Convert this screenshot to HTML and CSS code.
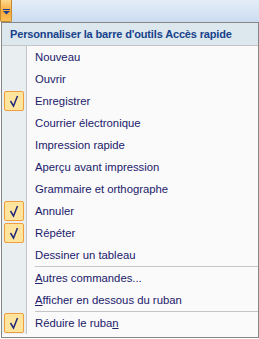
FILE: index.html
```html
<!DOCTYPE html>
<html lang="fr">
<head>
    <meta charset="UTF-8">
    <title>Barre d'outils Accès rapide</title>
    <link rel="stylesheet" href="styles.css">
</head>
<body>
    <div class="toolbar">
        <div class="qat-btn">
            <svg width="7" height="6" viewBox="0 0 7 6">
                <rect x="0" y="0" width="7" height="1" fill="#1e3f8f"/>
                <path d="M0 2 H7 L3.5 5.5 Z" fill="#1e3f8f"/>
            </svg>
        </div>
    </div>

    <div class="menu">
        <div class="menu-title">Personnaliser la barre d'outils Accès rapide</div>
        <div class="menu-body">
            <div class="item"><span class="check"></span><span class="label">Nouveau</span></div>
            <div class="item"><span class="check"></span><span class="label">Ouvrir</span></div>
            <div class="item"><span class="check on"><svg viewBox="0 0 18 18"><path d="M5.5 9 L8.5 14 L12.5 4" /></svg></span><span class="label">Enregistrer</span></div>
            <div class="item"><span class="check"></span><span class="label">Courrier électronique</span></div>
            <div class="item"><span class="check"></span><span class="label">Impression rapide</span></div>
            <div class="item"><span class="check"></span><span class="label">Aperçu avant impression</span></div>
            <div class="item"><span class="check"></span><span class="label">Grammaire et orthographe</span></div>
            <div class="item"><span class="check on"><svg viewBox="0 0 18 18"><path d="M5.5 9 L8.5 14 L12.5 4" /></svg></span><span class="label">Annuler</span></div>
            <div class="item"><span class="check on"><svg viewBox="0 0 18 18"><path d="M5.5 9 L8.5 14 L12.5 4" /></svg></span><span class="label">Répéter</span></div>
            <div class="item"><span class="check"></span><span class="label">Dessiner un tableau</span></div>
            <div class="sep"></div>
            <div class="item"><span class="check"></span><span class="label"><u>A</u>utres commandes...</span></div>
            <div class="item"><span class="check"></span><span class="label"><u>A</u>fficher en dessous du ruban</span></div>
            <div class="sep"></div>
            <div class="item"><span class="check on"><svg viewBox="0 0 18 18"><path d="M5.5 9 L8.5 14 L12.5 4" /></svg></span><span class="label">Réduire le ruba<u>n</u></span></div>
        </div>
    </div>
</body>
</html>
```

FILE: styles.css
```css
body {
    margin: 0;
    padding: 0;
    width: 259px;
    height: 339px;
    background: #ffffff;
    font-family: "Liberation Sans", Arial, sans-serif;
    font-size: 11.3px;
    overflow: hidden;
}
.toolbar {
    height: 22px;
    background: linear-gradient(#e4edf8, #cbdcf0);
}
.qat-btn {
    width: 12px;
    height: 22px;
    box-sizing: border-box;
    border: 1px solid #c58a2c;
    border-top: none;
    border-radius: 0 0 2px 2px;
    background: linear-gradient(#ffd98c, #f9a93c 55%, #fbc15a);
    display: flex;
    justify-content: center;
    align-items: center;
    padding-top: 2px;
}
.menu {
    width: 258px;
    height: 316px;
    box-sizing: border-box;
    border: 1px solid #868686;
    background: #fafafa;
    margin-left: 1px;
    overflow: hidden;
}
.menu-title {
    height: 22px;
    line-height: 22px;
    padding-left: 8px;
    background: #dde7ee;
    border-bottom: 1px solid #c5c5c5;
    color: #15428b;
    font-size: 11px;
    font-weight: bold;
    letter-spacing: -0.15px;
}
.menu-body {
    background: linear-gradient(to right, #e9eef0 0, #e9eef0 24px, #c5c5c5 24px, #c5c5c5 25px, #fafafa 25px);
}
.item {
    height: 22px;
    display: flex;
    align-items: center;
    color: #21206b;
}
.check {
    width: 20px;
    height: 20px;
    margin-left: 2px;
    box-sizing: border-box;
    flex-shrink: 0;
}
.check.on {
    border: 1px solid #f29d3b;
    background: #ffe49e;
    border-radius: 2px;
}
.check svg {
    display: block;
    width: 18px;
    height: 18px;
    fill: none;
    stroke: #1f2a7a;
    stroke-width: 1.5;
}
.label {
    margin-left: 11px;
}
.sep {
    height: 1px;
    margin-left: 33px;
    background: #c5c5c5;
}
```
